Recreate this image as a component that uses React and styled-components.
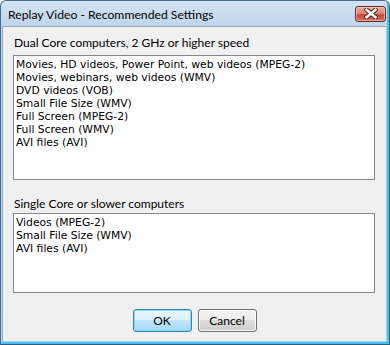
import React from "react";
import styled, { createGlobalStyle } from "styled-components";

const GlobalStyle = createGlobalStyle`
  html, body {
    margin: 0;
    padding: 0;
    background: #ffffff;
  }
`;

const dualCore = [
  "Movies, HD videos, Power Point, web videos (MPEG-2)",
  "Movies, webinars, web videos (WMV)",
  "DVD videos (VOB)",
  "Small File Size (WMV)",
  "Full Screen (MPEG-2)",
  "Full Screen (WMV)",
  "AVI files (AVI)",
];

const singleCore = ["Videos (MPEG-2)", "Small File Size (WMV)", "AVI files (AVI)"];

const CloseIcon = () => (
  <svg width="14" height="11" viewBox="0 0 14 11">
    <path
      d="M2.5 1.8 L11.5 9.2 M11.5 1.8 L2.5 9.2"
      stroke="#4e1a12"
      strokeWidth="4.4"
      strokeLinecap="square"
      fill="none"
    />
    <path
      d="M2.5 1.8 L11.5 9.2 M11.5 1.8 L2.5 9.2"
      stroke="#ffffff"
      strokeWidth="2.6"
      strokeLinecap="square"
      fill="none"
    />
  </svg>
);

const App = () => {
  return (
    <>
      <GlobalStyle />
      <Window>
        <TitleBar>
          <Title>Replay Video - Recommended Settings</Title>
          <CloseButton>
            <CloseIcon />
          </CloseButton>
        </TitleBar>
        <Content>
          <Label>Dual Core computers, 2 GHz or higher speed</Label>
          <ListBox height={125}>
            {dualCore.map((item) => (
              <Item key={item}>{item}</Item>
            ))}
          </ListBox>
          <Label top={17} bottom={2}>
            Single Core or slower computers
          </Label>
          <ListBox height={80}>
            {singleCore.map((item) => (
              <Item key={item}>{item}</Item>
            ))}
          </ListBox>
          <Buttons>
            <Button primary>OK</Button>
            <Button>Cancel</Button>
          </Buttons>
        </Content>
      </Window>
    </>
  );
};
export default App;

const Window = styled.div`
  width: 390px;
  height: 345px;
  box-sizing: border-box;
  display: flex;
  flex-direction: column;
  border: 1px solid #4c6a8c;
  border-right-color: #2a6f98;
  border-bottom-color: #2a5d80;
  border-radius: 6px 6px 0 0;
  background: linear-gradient(#d3e3f4, #bed4eb 26px, #c2d8ee);
  box-shadow: inset -2px -2px 0 #3fc4f0;
  padding: 0 2px 2px 1px;
  font-family: Lato, "Open Sans", sans-serif;
`;

const TitleBar = styled.div`
  height: 25px;
  display: flex;
  align-items: center;
  justify-content: space-between;
  padding: 0 1px 0 6px;
`;

const Title = styled.div`
  font-size: 12.2px;
  color: #000000;
  padding-top: 1px;
`;

const CloseButton = styled.div`
  width: 29px;
  height: 14px;
  display: flex;
  align-items: center;
  justify-content: center;
  border: 1px solid #6d2a22;
  border-radius: 3px;
  background: linear-gradient(#e8ab9c, #d98a77 45%, #c24a3b 55%, #d4705a);
  box-shadow: inset 0 0 0 1px rgba(255, 215, 205, 0.55);
`;

const Content = styled.div`
  flex: 1;
  display: flex;
  flex-direction: column;
  background: #f0f0f0;
  border: 1px solid #93abc6;
  border-right-color: #9fd4ea;
  border-bottom-color: #a9d6e8;
  padding: 9px 11px 8px 10px;
`;

const Label = styled.div`
  font-size: 12px;
  line-height: 14px;
  color: #000000;
  margin-top: ${(p) => p.top || 0}px;
  margin-bottom: ${(p) => (p.bottom === undefined ? 5 : p.bottom)}px;
  padding-left: 1px;
`;

const ListBox = styled.div`
  height: ${(p) => p.height}px;
  box-sizing: border-box;
  background: #ffffff;
  border: 1px solid #828790;
  padding: 2px 2px;
`;

const Item = styled.div`
  font-family: "DejaVu Sans", Verdana, sans-serif;
  font-size: 10.75px;
  line-height: 13px;
  color: #000000;
  white-space: nowrap;
`;

const Buttons = styled.div`
  display: flex;
  justify-content: center;
  gap: 6px;
  margin-top: 16px;
  padding-left: 1px;
`;

const Button = styled.button`
  width: 59px;
  height: 23px;
  box-sizing: border-box;
  font-family: Lato, "Open Sans", sans-serif;
  font-size: 12px;
  color: #000000;
  border-radius: 3px;
  border: 1px solid ${(p) => (p.primary ? "#3c7fb1" : "#707070")};
  background: ${(p) =>
    p.primary
      ? "linear-gradient(#eaf6fd, #d9f0fc 50%, #bee6fd 50%, #a7d9f5)"
      : "linear-gradient(#f2f2f2, #ebebeb 50%, #dddddd 50%, #cfcfcf)"};
  box-shadow: inset 0 0 0 1px
    ${(p) => (p.primary ? "rgba(120, 220, 250, 0.9)" : "rgba(255, 255, 255, 0.8)")};
  padding: 0;
`;
